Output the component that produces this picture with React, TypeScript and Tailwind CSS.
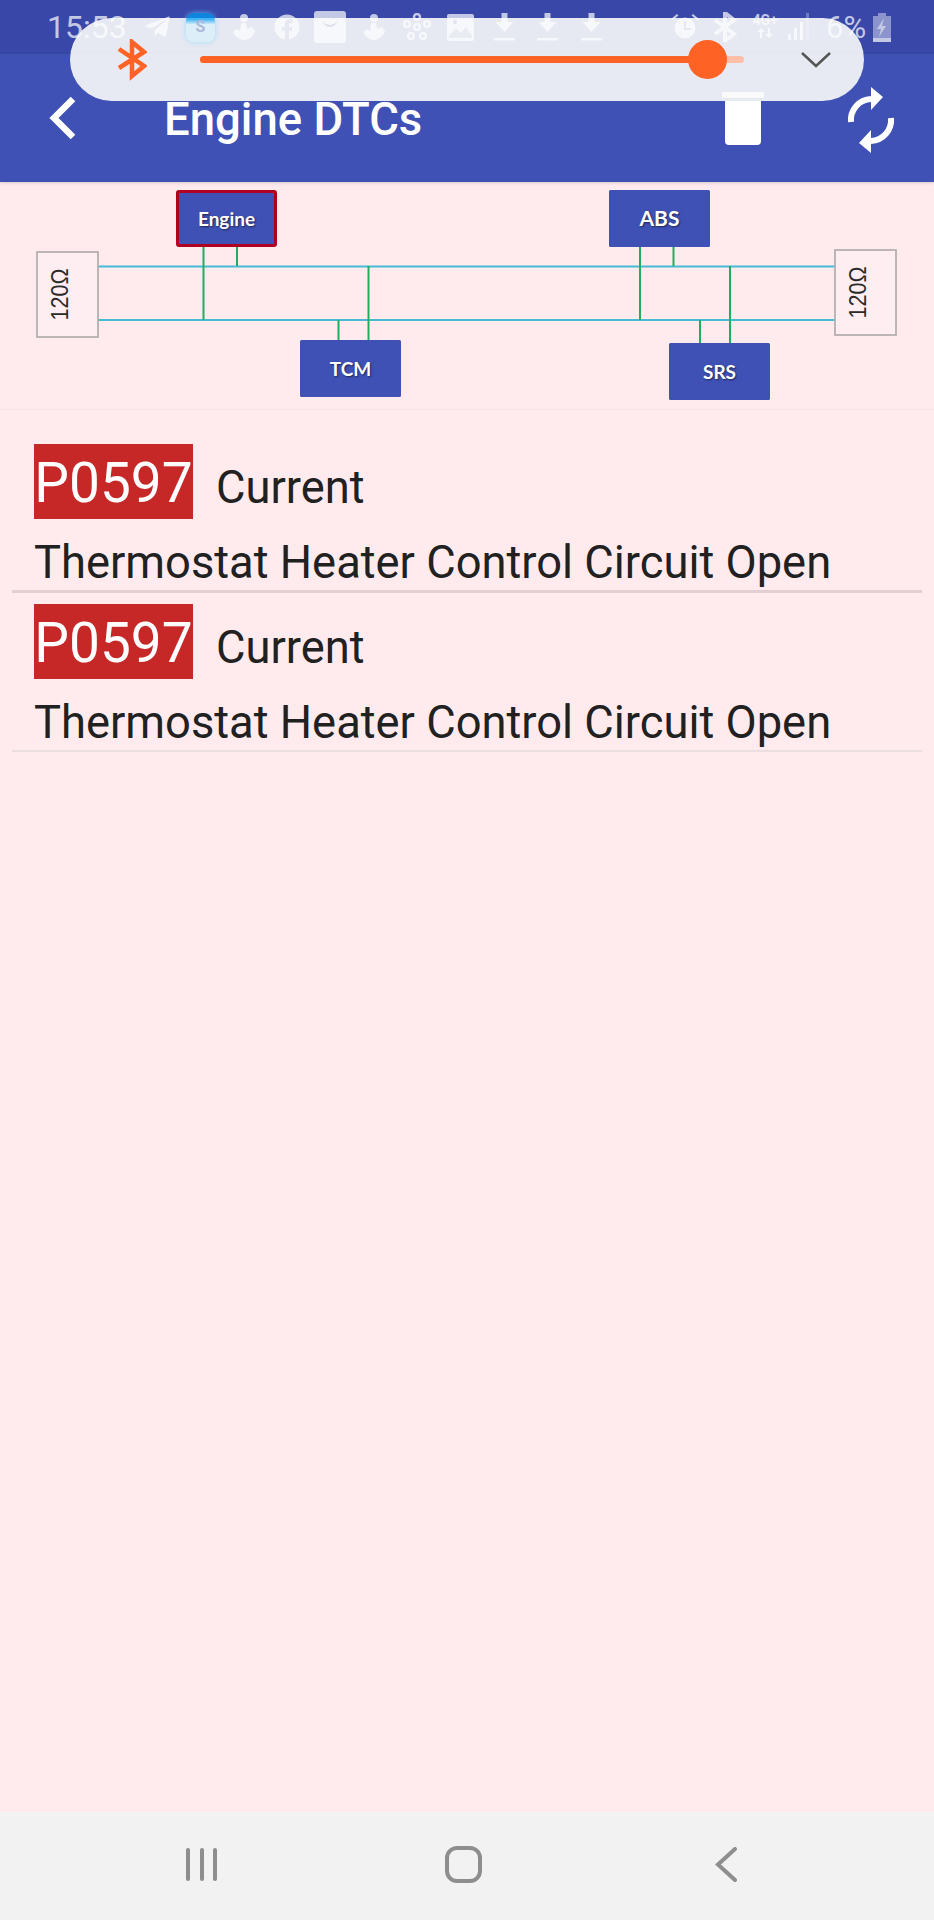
import React from "react";
import { FaTelegramPlane, FaFacebook } from "react-icons/fa";

const Anchor = () => (
  <svg width="22" height="28" viewBox="0 0 22 28" fill="white">
    <circle cx="11" cy="5" r="4" />
    <path d="M8 10h5l1 6 5-2 3 4c-1 5-6 9-11 9S2 23 0 19l4-3 3 2z" />
  </svg>
);

const Flower = () => (
  <svg width="28" height="28" viewBox="0 0 28 28" fill="none" stroke="white" strokeWidth="2.5">
    <circle cx="14" cy="4" r="3" />
    <circle cx="4" cy="11" r="3" />
    <circle cx="24" cy="11" r="3" />
    <circle cx="8" cy="23" r="3" />
    <circle cx="20" cy="23" r="3" />
    <circle cx="14" cy="14" r="3" />
  </svg>
);

const Picture = () => (
  <svg width="27" height="27" viewBox="0 0 27 27">
    <rect x="0" y="0" width="27" height="27" rx="2" fill="white" />
    <path d="M2 22l7-8 5 5 5-6 6 9v2H2z" fill="#eceef6" />
    <circle cx="8" cy="8" r="2" fill="#dfe2f0" />
  </svg>
);

const Download = () => (
  <svg width="21" height="28" viewBox="0 0 21 28" fill="white">
    <path d="M7.5 0h6v9h6L10.5 19 1.500 9h6z" />
    <rect x="0" y="25" width="21" height="2.500" />
  </svg>
);

const Alarm = () => (
  <svg width="28" height="28" viewBox="0 0 28 28" fill="white">
    <circle cx="14" cy="15" r="10.500" />
    <path d="M0 6l6-5 1.500 1.500-6 5zM28 6l-6-5-1.500 1.500 6 5z" />
    <path d="M13 8h2v7h5v2h-7z" fill="#e6e8f2" />
  </svg>
);

const SmallBluetooth = () => (
  <svg width="24" height="30" viewBox="0 0 24 30" fill="none" stroke="white" strokeWidth="4">
    <path d="M2 8l19 14-9 7V1l9 7L2 22" />
  </svg>
);

const Network = () => (
  <div className="flex h-[28px] w-[26px] flex-col items-center">
    <span className="text-[14px] font-bold leading-[15px] text-white">4G+</span>
    <svg width="20" height="10" viewBox="0 0 20 10" fill="white">
      <path d="M5 10V4H2l4-4 4 4H7v6zM15 0v6h3l-4 4-4-4h3V0z" />
    </svg>
  </div>
);

const Signal = () => (
  <svg width="21" height="28" viewBox="0 0 21 28" fill="white">
    <rect x="0" y="21" width="3" height="6" />
    <rect x="6" y="15" width="3" height="12" />
    <rect x="12" y="9" width="3" height="18" />
    <rect x="18" y="0" width="3" height="27" opacity="0.4" />
  </svg>
);

const Battery = () => (
  <svg width="18" height="29" viewBox="0 0 18 29">
    <rect x="5" y="0" width="8" height="3" fill="white" opacity="0.6" />
    <rect x="0" y="3" width="18" height="22" fill="white" opacity="0.6" />
    <rect x="0" y="25" width="18" height="4" fill="white" />
    <path d="M11 5L4 16h4l-2 8 7-11H9z" fill="white" />
  </svg>
);

const Device = ({ x, y, w = 101, h = 57, label, size, selected = false }: { x: number; y: number; w?: number; h?: number; label: string; size: number; selected?: boolean }) => (
  <g>
    <rect
      x={selected ? x + 1.5 : x}
      y={selected ? y + 1.5 : y}
      width={selected ? w - 3 : w}
      height={selected ? h - 3 : h}
      rx="1.500"
      fill="#3f51b5"
      stroke={selected ? "#b00020" : "none"}
      strokeWidth={selected ? 3 : 0}
    />
    <text
      x={x + w / 2}
      y={y + h / 2 + 7}
      textAnchor="middle"
      fill="white"
      fontFamily="Lato, sans-serif"
      fontWeight="700"
      fontSize={size}
      className="[text-shadow:1px_1px_2px_rgba(0,0,0,0.55)]"
    >
      {label}
    </text>
  </g>
);

const Resistor = ({ x, y }: { x: number; y: number }) => (
  <g>
    <rect x={x} y={y} width="61" height="85" fill="#ffeef1" stroke="#b5b0b1" strokeWidth="1.800" />
    <text
      transform={`translate(${x + 31} ${y + 42.500}) rotate(-90)`}
      textAnchor="middle"
      fill="#2a2a2a"
      fontFamily="'Liberation Sans', sans-serif"
      fontSize="24"
      textLength="52"
      lengthAdjust="spacingAndGlyphs"
    >
      120Ω
    </text>
  </g>
);

const BusDiagram = () => {
  const green = [
    [203.5, 64, 138],
    [237, 64, 84],
    [368.5, 84, 159],
    [338.5, 138, 159],
    [640, 64, 138],
    [673.5, 64, 84],
    [730, 84, 161],
    [700, 138, 161],
  ];
  return (
    <svg width="934" height="227" viewBox="0 0 934 227" className="block">
      <line x1="98" y1="84.500" x2="835" y2="84.500" stroke="#45bcd6" strokeWidth="2" />
      <line x1="98" y1="138" x2="835" y2="138" stroke="#45bcd6" strokeWidth="2" />
      {green.map(([x, a, b], i) => (
        <line key={i} x1={x} y1={a} x2={x} y2={b} stroke="#1fae5f" strokeWidth="2" />
      ))}
      <Resistor x={37} y={70} />
      <Resistor x={835} y={68} />
      <Device x={176} y={8} label="Engine" size={19} selected />
      <Device x={609} y={8} label="ABS" size={21} />
      <Device x={300} y={158} label="TCM" size={19} />
      <Device x={669} y={161} label="SRS" size={19} />
    </svg>
  );
};

const DtcRow = ({ className }: { className: string }) => (
  <div className={className}>
    <div className="flex h-[75px] items-center">
      <span className="flex h-[75px] w-[159px] items-center justify-center bg-[#c62828] pt-[4px] text-[55px] leading-none text-white">
        P0597
      </span>
      <span className="ml-[23px] mt-[12px] text-[45.300px] leading-none text-[#212121]">Current</span>
    </div>
    <div className="pb-[2px] pt-[19px] text-[45.300px] leading-[50px] text-[#212121]">
      Thermostat Heater Control Circuit Open
    </div>
  </div>
);

export default function App() {
  return (
    <div className="relative flex h-[1920px] w-[934px] flex-col overflow-hidden bg-[#ffebee] font-['Roboto',sans-serif]">
      {/* status bar: background stays below the floating pill, its icons stay above it */}
      <div className="flex h-[54px] shrink-0 bg-[#3847a8]">
        <div className="relative z-30 flex h-[54px] items-center pl-[47px] text-white opacity-70">
          <span className="w-[81px] text-[32px] leading-none">15:53</span>
          <FaTelegramPlane className="ml-[15px] h-[28px] w-[29px]" />
          <div className="ml-[14px] flex h-[29px] w-[29px] items-center justify-center rounded-[8px] bg-[linear-gradient(#00a0f8_0%,#00a0f8_22%,#d8f3fd_40%)] shadow-[0_0_5px_#7fdcff]">
            <span className="text-[16px] font-bold leading-none text-[#9aa3d0]">S</span>
          </div>
          <div className="ml-[18px]"><Anchor /></div>
          <FaFacebook className="ml-[19px] h-[26px] w-[26px]" />
          <div className="ml-[14px] flex h-[32px] w-[32px] items-start justify-center rounded-[3px] bg-white pt-[9px]">
            <div className="h-[7px] w-[14px] rounded-b-full border-b-2 border-[#d8daea]" />
          </div>
          <div className="ml-[17px]"><Anchor /></div>
          <div className="ml-[18px]"><Flower /></div>
          <div className="ml-[16px]"><Picture /></div>
          <div className="ml-[20px]"><Download /></div>
          <div className="ml-[22px]"><Download /></div>
          <div className="ml-[23px]"><Download /></div>
          <div className="ml-[69px]"><Alarm /></div>
          <div className="ml-[14px]"><SmallBluetooth /></div>
          <div className="ml-[15px]"><Network /></div>
          <div className="ml-[10px]"><Signal /></div>
          <span className="ml-[17px] w-[40px] text-[31px] leading-none">6%</span>
          <div className="ml-[7px]"><Battery /></div>
        </div>
      </div>

      {/* app bar */}
      <header className="relative flex h-[128px] shrink-0 items-center bg-[#3f51b5] pb-[12px] shadow-[0_1px_3px_rgba(0,0,0,0.15)]">
        <svg width="30" height="46" viewBox="0 0 30 46" fill="none" stroke="white" strokeWidth="6.500" className="ml-[48px] mt-[12px]">
          <path d="M25 4L6 23l19 19" />
        </svg>
        <h1 className="ml-[86px] mt-[16px] text-[45.500px] font-medium leading-none text-white">Engine DTCs</h1>
        <svg width="42" height="53" viewBox="0 0 42 53" fill="white" className="ml-[300px] mt-[12px]">
          <rect x="0" y="0" width="42" height="6" rx="1" />
          <path d="M3 9h36v40a4 4 0 0 1-4 4H7a4 4 0 0 1-4-4z" />
        </svg>
        <svg width="50" height="70" viewBox="0 0 50 70" fill="none" className="ml-[82px] mt-[16px]">
          <path d="M5 37A21 21 0 0 1 25 14" stroke="white" strokeWidth="6" />
          <path d="M45 33A21 21 0 0 1 25 56" stroke="white" strokeWidth="6" />
          <path d="M25 2L37 12 25 25zM25 68L13 58 25 45z" fill="white" />
        </svg>
      </header>

      {/* floating bluetooth pill over the bars */}
      <div className="absolute left-[70px] top-[18px] z-20 flex h-[83px] w-[794px] items-center rounded-full bg-[#f9f9f9]/90">
        <svg width="30" height="42" viewBox="0 0 30 42" fill="none" stroke="#ff6225" strokeWidth="4.500" className="ml-[47px]">
          <path d="M2 10l25 17-12 10V3l12 10L2 29" />
        </svg>
        <div className="relative ml-[53px] h-[7px] w-[544px] rounded-full bg-[#ffbfa8]">
          <div className="h-[7px] w-[507px] rounded-full bg-[#ff6225]" />
          <div className="absolute left-[488px] top-[-16px] h-[39px] w-[39px] rounded-full bg-[#ff6225]" />
        </div>
        <svg width="30" height="18" viewBox="0 0 30 18" fill="none" stroke="#555555" strokeWidth="2.500" className="ml-[57px]">
          <path d="M1 2l14 13L29 2" />
        </svg>
      </div>

      {/* main content */}
      <main className="flex-1">
        <section className="h-[228px] border-b border-[#f5e3e7]">
          <BusDiagram />
        </section>
        <div className="mx-[12px]">
          <DtcRow className="border-b-[3px] border-[#e3cfd3] pl-[22px] pt-[34px]" />
          <DtcRow className="border-b-[2px] border-[#ecdfe1] pl-[22px] pt-[11px]" />
        </div>
      </main>

      {/* navigation bar */}
      <nav className="flex h-[108px] shrink-0 items-center bg-[#f2f2f2] pb-[4px]">
        <svg width="32" height="33" viewBox="0 0 32 33" fill="#8e8e8e" className="ml-[186px]">
          <rect x="0" y="0" width="4" height="33" rx="2" />
          <rect x="14" y="0" width="4" height="33" rx="2" />
          <rect x="27" y="0" width="4" height="33" rx="2" />
        </svg>
        <div className="ml-[227px] h-[37px] w-[37px] rounded-[12px] border-[4.500px] border-[#8e8e8e]" />
        <svg width="22" height="35" viewBox="0 0 22 35" fill="none" stroke="#8e8e8e" strokeWidth="4" strokeLinecap="round" className="ml-[233px]">
          <path d="M20 2L3 17.500 20 33" />
        </svg>
      </nav>
    </div>
  );
}
